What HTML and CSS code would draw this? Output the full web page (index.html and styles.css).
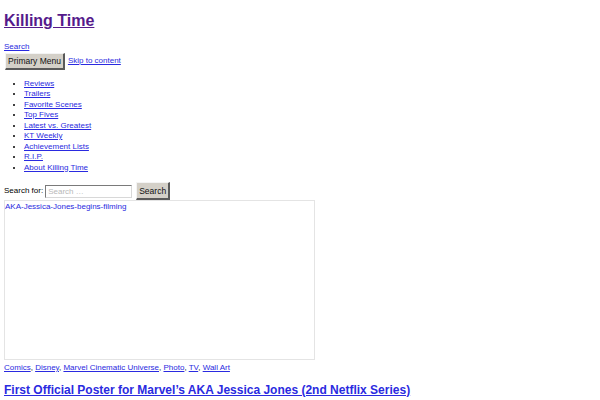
FILE: index.html
```html
<!DOCTYPE html>
<html lang="en">
<head>
<meta charset="utf-8">
<title>Killing Time</title>
<link rel="stylesheet" href="styles.css">
</head>
<body>
<header class="site-header">
  <h1 class="site-title"><a href="#">Killing Time</a></h1>
  <a class="search-toggle" href="#">Search</a>
  <div class="menu-row">
    <button class="btn menu-toggle" type="button">Primary Menu</button>
    <a class="skip-link" href="#">Skip to content</a>
  </div>
  <ul class="menu">
    <li><a href="#">Reviews</a></li>
    <li><a href="#">Trailers</a></li>
    <li><a href="#">Favorite Scenes</a></li>
    <li><a href="#">Top Fives</a></li>
    <li><a href="#">Latest vs. Greatest</a></li>
    <li><a href="#">KT Weekly</a></li>
    <li><a href="#">Achievement Lists</a></li>
    <li><a href="#">R.I.P.</a></li>
    <li><a href="#">About Killing Time</a></li>
  </ul>
  <form class="search-form">
    <label class="search-label">Search for:</label>
    <input class="search-field" type="search" placeholder="Search …">
    <button class="btn search-submit" type="button">Search</button>
  </form>
</header>
<main class="content">
  <article class="post">
    <a class="thumb" href="#"><span class="thumb-alt">AKA-Jessica-Jones-begins-filming</span></a>
    <p class="cats"><a href="#">Comics</a>, <a href="#">Disney</a>, <a href="#">Marvel Cinematic Universe</a>, <a href="#">Photo</a>, <a href="#">TV</a>, <a href="#">Wall Art</a></p>
    <h2 class="entry-title"><a href="#">First Official Poster for Marvel’s AKA Jessica Jones (2nd Netflix Series)</a></h2>
  </article>
</main>
</body>
</html>
```

FILE: styles.css
```css
html, body {
  background: #ffffff;
}
body {
  margin: 0;
  padding: 0 4px;
  font-family: "Liberation Sans", Arial, sans-serif;
  font-size: 8px;
  line-height: 10.5px;
  color: #000000;
}
a {
  color: #2a2ae0;
}
.site-title {
  margin: 0;
  padding: 11px 0 11px;
  font-size: 16px;
  line-height: 19px;
  font-weight: bold;
}
.site-title a {
  color: #551a8b;
}
.search-toggle {
  display: inline-block;
  margin-top: 1px;
}
.menu-row {
  display: flex;
  align-items: center;
  gap: 3px;
  margin-top: 0;
}
.btn {
  font-family: "Liberation Sans", Arial, sans-serif;
  font-size: 8.5px;
  color: #111111;
  background: #d4d0c8;
  border-style: solid;
  border-width: 1px 2px 2px 1px;
  border-color: #f4f4f4 #5a5a5a #5a5a5a #f4f4f4;
  padding: 0 2px;
  margin: 0;
  white-space: nowrap;
  box-sizing: border-box;
}
.menu-toggle {
  height: 17px;
  min-width: 59px;
  margin-left: 1px;
}
.menu {
  margin: 9px 0 9px;
  padding-left: 20px;
}
.menu li {
  line-height: 10.5px;
}
.search-form {
  display: flex;
  align-items: center;
  margin: 0;
}
.search-label {
  margin-right: 2px;
}
.search-field {
  width: 87px;
  height: 13px;
  box-sizing: border-box;
  border-style: solid;
  border-width: 1px;
  border-color: #7a7a7a #d8d8d8 #d8d8d8 #7a7a7a;
  padding: 0 2px;
  font-family: "Liberation Sans", Arial, sans-serif;
  font-size: 8px;
  margin: 0 4px 0 0;
}
.search-field::placeholder {
  color: #b8b8b8;
}
.search-submit {
  min-width: 34px;
  height: 18px;
}
.thumb {
  display: block;
  box-sizing: border-box;
  width: 311px;
  height: 160px;
  border: 1px solid #e4e4e4;
  text-decoration: none;
  padding: 1px 0 0 0;
  margin-top: 0;
}
.thumb-alt {
  color: #2a2ae0;
}
.cats {
  margin: 3px 0 0;
}
.entry-title {
  margin: 9px 0 0;
  font-size: 12px;
  line-height: 15px;
  font-weight: bold;
}
```
